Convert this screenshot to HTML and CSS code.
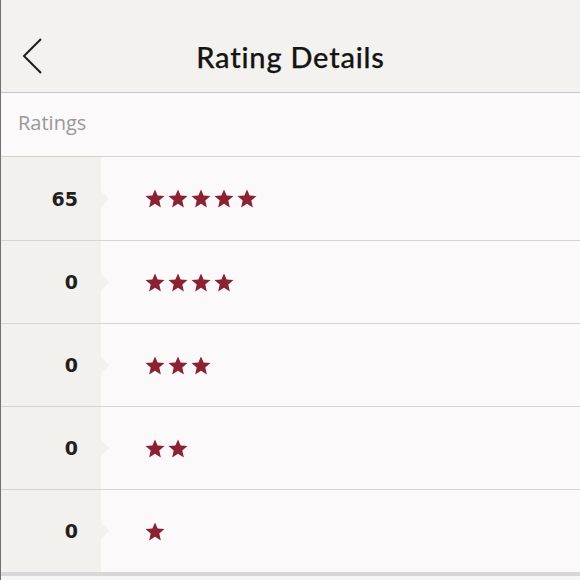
FILE: index.html
```html
<!DOCTYPE html>
<html>
<head>
<meta charset="utf-8">
<link rel="stylesheet" href="styles.css">
</head>
<body>
<div class="page">
  <header class="topbar">
    <svg class="back" width="22" height="38" viewBox="0 0 22 38"><polyline points="19,2 2,19 19,36" fill="none" stroke="#1e1e1e" stroke-width="2"/></svg>
    <h1 class="title">Rating Details</h1>
  </header>
  <div class="section-label">Ratings</div>
  <div class="rows">
    <div class="row"><div class="count">65</div><div class="stars" data-n="5"></div></div>
    <div class="row"><div class="count">0</div><div class="stars" data-n="4"></div></div>
    <div class="row"><div class="count">0</div><div class="stars" data-n="3"></div></div>
    <div class="row"><div class="count">0</div><div class="stars" data-n="2"></div></div>
    <div class="row"><div class="count">0</div><div class="stars" data-n="1"></div></div>
  </div>
  <div class="bottom"></div>
</div>
<script>
  var star = '<svg class="star" width="20" height="19" viewBox="0 0 24 23"><polygon points="12,0.5 15.2,8 23.5,8.6 17.2,14 19.1,22.3 12,17.9 4.9,22.3 6.8,14 0.5,8.6 8.8,8" fill="#8a2234"/></svg>';
  document.querySelectorAll('.stars').forEach(function (el) {
    var n = +el.getAttribute('data-n'), h = '';
    for (var i = 0; i < n; i++) h += star;
    el.innerHTML = h;
  });
</script>
</body>
</html>
```
FILE: styles.css
```css
html, body {
  margin: 0;
  padding: 0;
  background: #f6f6f6;
}
.page {
  width: 580px;
  height: 580px;
  overflow: hidden;
  border-left: 1px solid #707070;
  box-sizing: border-box;
  background: #f6f6f6;
  font-family: "Lato", "Open Sans", sans-serif;
}
.topbar {
  position: relative;
  height: 92px;
  background: #f4f2ef;
  border-bottom: 1px solid #c8c6c4;
  display: flex;
  align-items: center;
  justify-content: center;
}
.back {
  position: absolute;
  left: 21px;
  top: 37px;
}
.title {
  margin: 0;
  margin-top: 20px;
  font-size: 29px;
  font-weight: 500;
  color: #141414;
  letter-spacing: 0.8px;
  -webkit-text-stroke: 0.25px #141414;
}
.section-label {
  background: #fbf9fa;
  border-bottom: 1px solid #d4d2d2;
  box-sizing: border-box;
  height: 64px;
  padding-left: 17px;
  display: flex;
  align-items: center;
  font-family: "Open Sans", sans-serif;
  font-size: 20px;
  color: #9a9898;
  padding-bottom: 4px;
}
.row {
  display: flex;
  height: 83px;
  box-sizing: border-box;
  border-bottom: 1px solid #d6d4d4;
  background: #fbf9fa;
}
.row:first-child {
  height: 84px;
}
.row:last-child {
  border-bottom: 4px solid #d8d6d6;
  height: 86px;
}
.count {
  position: relative;
  width: 100px;
  flex: none;
  background: #f3f1ee;
  box-sizing: border-box;
  padding-right: 23px;
  display: flex;
  align-items: center;
  justify-content: flex-end;
  font-family: "DejaVu Sans", sans-serif;
  font-size: 19px;
  font-weight: 700;
  color: #1f1f1f;
}
.count::after {
  content: "";
  position: absolute;
  right: -8px;
  top: 50%;
  margin-top: -8px;
  border-left: 8px solid #f3f1ee;
  border-top: 8px solid transparent;
  border-bottom: 8px solid transparent;
}
.stars {
  display: flex;
  align-items: center;
  gap: 3px;
  padding-left: 44px;
}
.star {
  display: block;
}
.bottom {
  height: 10px;
  background: #f6f6f6;
}
```
